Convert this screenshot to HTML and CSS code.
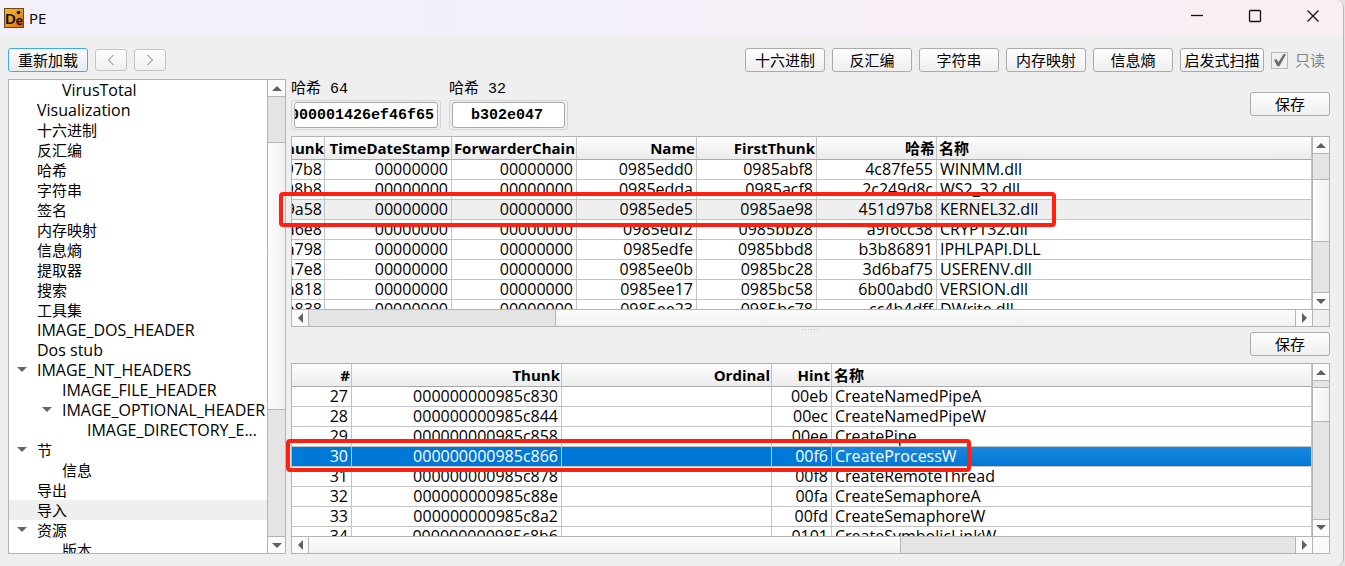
FILE: index.html
```html
<!DOCTYPE html>
<html lang="zh-CN">
<head>
<meta charset="utf-8">
<title>PE</title>
<link rel="stylesheet" href="styles.css">
</head>
<body>
<div class="window">
  <header class="titlebar">
    <svg class="logo" viewBox="0 0 20 20" aria-hidden="true">
      <defs><linearGradient id="lg" x1="0" y1="0" x2="1" y2="1"><stop offset="0" stop-color="#f2bd28"/><stop offset=".55" stop-color="#e59522"/><stop offset="1" stop-color="#e2571c"/></linearGradient></defs>
      <rect x=".5" y=".5" width="19" height="19" fill="url(#lg)" stroke="#6b4a1c"/>
      <text x="1" y="16" class="logo-text">D<tspan class="logo-e" y="17">e</tspan></text>
      <circle cx="14.500" cy="4.500" r="1.800" fill="#16120c"/>
    </svg>
    <span class="title">PE</span>
    <div class="controls">
      <button type="button" aria-label="Minimize"><svg viewBox="0 0 14 14"><path d="M1 6.500H13"/></svg></button>
      <button type="button" aria-label="Maximize"><svg viewBox="0 0 14 14"><rect x="1.500" y="1.500" width="11" height="11" rx="1"/></svg></button>
      <button type="button" aria-label="Close"><svg viewBox="0 0 14 14"><path d="M1.500 1.500L12.500 12.500M12.500 1.500L1.500 12.500"/></svg></button>
    </div>
  </header>

  <nav class="toolbar">
    <button type="button" class="btn focus">重新加载</button>
    <button type="button" class="btn step" aria-label="Back"><svg viewBox="0 0 8 12"><path d="M6.500 1L1.500 6L6.500 11"/></svg></button>
    <button type="button" class="btn step" aria-label="Forward"><svg viewBox="0 0 8 12"><path d="M1.500 1L6.500 6L1.500 11"/></svg></button>
    <span class="spacer"></span>
    <button type="button" class="btn">十六进制</button>
    <button type="button" class="btn">反汇编</button>
    <button type="button" class="btn">字符串</button>
    <button type="button" class="btn">内存映射</button>
    <button type="button" class="btn">信息熵</button>
    <button type="button" class="btn wide">启发式扫描</button>
    <label class="readonly"><input type="checkbox" checked disabled>只读</label>
  </nav>

  <main class="content">
    <aside class="tree">
      <ul>
        <li class="l2">VirusTotal</li>
        <li>Visualization</li>
        <li class="zh">十六进制</li>
        <li class="zh">反汇编</li>
        <li class="zh">哈希</li>
        <li class="zh">字符串</li>
        <li class="zh">签名</li>
        <li class="zh">内存映射</li>
        <li class="zh">信息熵</li>
        <li class="zh">提取器</li>
        <li class="zh">搜索</li>
        <li class="zh">工具集</li>
        <li>IMAGE_DOS_HEADER</li>
        <li>Dos stub</li>
        <li class="open">IMAGE_NT_HEADERS</li>
        <li class="l2">IMAGE_FILE_HEADER</li>
        <li class="l2 open">IMAGE_OPTIONAL_HEADER</li>
        <li class="l3">IMAGE_DIRECTORY_E...</li>
        <li class="zh open">节</li>
        <li class="zh l2">信息</li>
        <li class="zh">导出</li>
        <li class="zh current">导入</li>
        <li class="zh open">资源</li>
        <li class="zh l2">版本</li>
      </ul>
      <div class="vbar tree-bar"><i class="arrow up"></i><i class="before"></i><i class="thumb"></i><i class="after"></i><i class="arrow down"></i></div>
    </aside>

    <section class="detail">
      <div class="summary">
        <div class="hash">
          <label for="h64">哈希 64</label>
          <div class="frame frame64"><input id="h64" type="text" readonly value="000001426ef46f65"></div>
        </div>
        <div class="hash">
          <label for="h32">哈希 32</label>
          <div class="frame frame32"><input id="h32" type="text" readonly value="b302e047"></div>
        </div>
        <span class="spacer"></span>
        <button type="button" class="btn">保存</button>
      </div>

      <div class="grid">
        <div class="view">
          <table>
            <colgroup><col class="w33"><col class="w127"><col class="w125"><col class="w120"><col class="w120"><col class="w120"><col></colgroup>
            <thead><tr><th>hunk</th><th>TimeDateStamp</th><th>ForwarderChain</th><th>Name</th><th>FirstThunk</th><th>哈希</th><th>名称</th></tr></thead>
            <tbody>
              <tr><td>97b8</td><td>00000000</td><td>00000000</td><td>0985edd0</td><td>0985abf8</td><td>4c87fe55</td><td>WINMM.dll</td></tr>
              <tr><td>98b8</td><td>00000000</td><td>00000000</td><td>0985edda</td><td>0985acf8</td><td>2c249d8c</td><td>WS2_32.dll</td></tr>
              <tr class="current"><td>9a58</td><td>00000000</td><td>00000000</td><td>0985ede5</td><td>0985ae98</td><td>451d97b8</td><td>KERNEL32.dll</td></tr>
              <tr><td>a6e8</td><td>00000000</td><td>00000000</td><td>0985edf2</td><td>0985bb28</td><td>a9f6cc38</td><td>CRYPT32.dll</td></tr>
              <tr><td>a798</td><td>00000000</td><td>00000000</td><td>0985edfe</td><td>0985bbd8</td><td>b3b86891</td><td>IPHLPAPI.DLL</td></tr>
              <tr><td>a7e8</td><td>00000000</td><td>00000000</td><td>0985ee0b</td><td>0985bc28</td><td>3d6baf75</td><td>USERENV.dll</td></tr>
              <tr><td>a818</td><td>00000000</td><td>00000000</td><td>0985ee17</td><td>0985bc58</td><td>6b00abd0</td><td>VERSION.dll</td></tr>
              <tr><td>a838</td><td>00000000</td><td>00000000</td><td>0985ee23</td><td>0985bc78</td><td>cc4b4dff</td><td>DWrite.dll</td></tr>
            </tbody>
          </table>
        </div>
        <div class="vbar dll-v"><i class="arrow up"></i><i class="before"></i><i class="thumb"></i><i class="after"></i><i class="arrow down"></i></div>
        <div class="hbar dll-h"><i class="arrow left"></i><i class="before"></i><i class="thumb"></i><i class="after"></i><i class="arrow right"></i></div>
        <div class="corner"></div>
        <div class="mark mark-dll"></div>
      </div>

      <div class="splitter"></div>
      <div class="actions"><button type="button" class="btn">保存</button></div>

      <div class="grid">
        <div class="view">
          <table>
            <colgroup><col class="w60"><col class="w210"><col class="w210"><col class="w60"><col></colgroup>
            <thead><tr><th>#</th><th>Thunk</th><th>Ordinal</th><th>Hint</th><th>名称</th></tr></thead>
            <tbody>
              <tr><td>27</td><td>000000000985c830</td><td></td><td>00eb</td><td>CreateNamedPipeA</td></tr>
              <tr><td>28</td><td>000000000985c844</td><td></td><td>00ec</td><td>CreateNamedPipeW</td></tr>
              <tr><td>29</td><td>000000000985c858</td><td></td><td>00ee</td><td>CreatePipe</td></tr>
              <tr class="selected"><td>30</td><td>000000000985c866</td><td></td><td>00f6</td><td>CreateProcessW</td></tr>
              <tr><td>31</td><td>000000000985c878</td><td></td><td>00f8</td><td>CreateRemoteThread</td></tr>
              <tr><td>32</td><td>000000000985c88e</td><td></td><td>00fa</td><td>CreateSemaphoreA</td></tr>
              <tr><td>33</td><td>000000000985c8a2</td><td></td><td>00fd</td><td>CreateSemaphoreW</td></tr>
              <tr><td>34</td><td>000000000985c8b6</td><td></td><td>0101</td><td>CreateSymbolicLinkW</td></tr>
            </tbody>
          </table>
        </div>
        <div class="vbar fn-v"><i class="arrow up"></i><i class="before"></i><i class="thumb"></i><i class="after"></i><i class="arrow down"></i></div>
        <div class="hbar fn-h"><i class="arrow left"></i><i class="thumb"></i><i class="after"></i><i class="arrow right"></i></div>
        <div class="corner light"></div>
        <div class="mark mark-fn"></div>
      </div>
    </section>
  </main>
</div>
<script src="app.js"></script>
</body>
</html>
```

FILE: app.js
```js
// Show the low-order digits of the long hash.
const hash = document.getElementById("h64");
hash.scrollLeft = hash.scrollWidth;
```

FILE: styles.css
```css
* { box-sizing: border-box; }

body {
  margin: 0;
  background: #e3e3e3;
  color: #000;
  font: 15px/20px "Open Sans", "Noto Sans CJK SC", sans-serif;
}

button, input { font: inherit; color: inherit; }

.window {
  display: flex;
  flex-direction: column;
  height: 100vh;
  margin-right: 1px;
  border-right: 1px solid #b9b9b9;
  border-radius: 0 8px 8px 0;
  background: #efefef;
  overflow: hidden;
}

/* Title bar */
.titlebar {
  display: flex;
  align-items: center;
  flex: none;
  height: 35px;
  padding-left: 4px;
  background: linear-gradient(90deg, #f2f0f8, #f4eff8 50%, #faeef6 80%, #f9eef3);
}
.logo { width: 20px; height: 20px; }
.logo-text { font: 900 14px "Lato", sans-serif; fill: #16120c; }
.logo-e { font-size: 13px; }
.title { margin-left: 5px; font-size: 15px; }
.controls { display: flex; margin-left: auto; padding-right: 1px; height: 100%; }
.controls button {
  display: flex;
  align-items: center;
  justify-content: center;
  width: 58px;
  padding: 0 0 3px;
  border: 0;
  background: none;
}
.controls svg { width: 14px; height: 14px; fill: none; stroke: #111; stroke-width: 1.3; }

/* Buttons */
.btn {
  width: 80px;
  height: 24px;
  padding: 0;
  border: 1px solid #ababab;
  border-radius: 3px;
  background: linear-gradient(#fdfdfd, #efefef);
  line-height: 20px;
  white-space: nowrap;
}
.btn.wide { width: 84px; }
.btn.focus { border-color: #3daaf2; background: linear-gradient(#fbfcfd, #e5ecf2); }
.btn.step {
  display: flex;
  align-items: center;
  justify-content: center;
  width: 32px;
  height: 22px;
  border-color: #c4c4c4;
}
.step svg { width: 8px; height: 12px; fill: none; stroke: #777; }
.spacer { flex: 1; }

.toolbar {
  display: flex;
  align-items: center;
  gap: 7px;
  flex: none;
  padding: 13px 18px 7px 8px;
}
.readonly { display: flex; align-items: center; gap: 7px; color: #848484; }
.readonly input {
  appearance: none;
  width: 17px;
  height: 17px;
  margin: 0;
  border: 1px solid #b8b8b8;
  background: #efefef;
}
.readonly input:checked::before {
  content: "";
  display: block;
  width: 13px;
  height: 13px;
  margin: 1px;
  background: #6e6e6e;
  clip-path: polygon(8% 50%, 26% 42%, 42% 68%, 84% 0, 100% 8%, 48% 100%, 32% 96%);
}

/* Body */
.content {
  display: flex;
  gap: 5px;
  flex: 1;
  min-height: 0;
  padding: 0 13px 12px 8px;
}

.tree {
  display: flex;
  flex: none;
  width: 278px;
  border: 1px solid #b4b4b4;
  background: #fff;
  overflow: hidden;
}
.tree ul { flex: 1; min-width: 0; margin: 0; padding: 0; list-style: none; }
.tree li { position: relative; height: 20px; padding-left: 28px; font-size: 16px; white-space: nowrap; }
.tree .zh { font-size: 15px; }
.tree .l2 { padding-left: 53px; }
.tree .l3 { padding-left: 78px; }
.tree .current { background: #efefef; }
.tree .open::before {
  content: "";
  position: absolute;
  top: 7px;
  left: 8px;
  border: 5px solid transparent;
  border-top-color: #666;
  border-bottom: 0;
}
.tree .l2.open::before { left: 33px; }

.detail { display: flex; flex-direction: column; flex: 1; min-width: 0; }

.summary { display: flex; align-items: center; gap: 8px; flex: none; height: 57px; }
.summary .btn { margin-bottom: 7px; }
.hash { display: flex; flex-direction: column; margin-bottom: 5px; }
.hash label { line-height: 20px; font-family: "Liberation Mono", "Noto Sans CJK SC", monospace; }
.frame { height: 30px; padding: 1px 2px 3px; border: 1px solid #d5d5d5; border-radius: 3px; }
.frame64 { width: 150px; }
.frame32 { width: 119px; }
.frame input {
  display: block;
  width: 100%;
  height: 26px;
  padding: 0 3px 0 0;
  border: 1px solid #a8a8a8;
  border-radius: 3px;
  background: #fff;
  font: bold 15px "Liberation Mono", monospace;
  text-align: center;
}

/* Data grids */
.grid {
  position: relative;
  display: grid;
  grid-template: minmax(0, 1fr) 17px / minmax(0, 1fr) 17px;
  flex: 1 1 0;
  min-height: 0;
  border: 1px solid #b4b4b4;
  background: #fff;
}
.view { overflow: hidden; }
table { width: 100%; table-layout: fixed; border-collapse: separate; border-spacing: 0; }
th, td {
  height: 20px;
  padding: 0 3px 0 0;
  border-right: 1px solid #c4c4c4;
  border-bottom: 1px solid #c4c4c4;
  font-size: 16px;
  line-height: 19px;
  text-align: right;
  white-space: nowrap;
}
th {
  height: 23px;
  padding: 0 1px 0 0;
  border-bottom-color: #ababab;
  background: linear-gradient(#fdfdfd, #ececec);
  font-size: 15px;
  font-weight: bold;
}
th:first-child, td:first-child { direction: rtl; overflow: hidden; }
th:last-child, td:last-child { padding-left: 3px; text-align: left; }
th:last-child { padding-left: 2px; }
tr.current td { background: #efefef; }
tr.selected td { background: #0078d7; color: #fff; }
tr.selected td:last-child { background: linear-gradient(#1a86dc, #0078d7); }
.w33 { width: 33px; }
.w60 { width: 60px; }
.w120 { width: 120px; }
.w125 { width: 125px; }
.w127 { width: 127px; }
.w210 { width: 210px; }

/* Scroll bars */
.vbar, .hbar { display: flex; background: #e4e4e4; }
.vbar { flex-direction: column; flex: none; width: 18px; border-left: 1px solid #b4b4b4; }
.grid .vbar { width: 17px; }
.hbar { border-top: 1px solid #b4b4b4; }
.arrow {
  display: flex;
  align-items: center;
  justify-content: center;
  flex: 0 0 17px;
  background: #fafafa;
}
.arrow::before { content: ""; border: 5px solid transparent; }
.up { border-bottom: 1px solid #b4b4b4; }
.up::before { border-bottom-color: #606060; border-top: 0; }
.down { border-top: 1px solid #b4b4b4; }
.down::before { border-top-color: #606060; border-bottom: 0; }
.left { border-right: 1px solid #b4b4b4; }
.left::before { border-right-color: #606060; border-left: 0; }
.right { border-left: 1px solid #b4b4b4; }
.right::before { border-left-color: #606060; border-right: 0; }
.vbar .thumb { border: solid #b4b4b4; border-width: 1px 0; background: linear-gradient(90deg, #fcfcfc, #f1f1f1); }
.hbar .thumb { background: linear-gradient(#fcfcfc, #f1f1f1); }
.before + .thumb { border-left: 0 solid #b4b4b4; }
.dll-h .thumb { border-left-width: 1px; }
.fn-h .thumb { border-right: 1px solid #b4b4b4; }
.tree-bar .before { flex: 45; }
.tree-bar .thumb { flex: 267; }
.tree-bar .after { flex: 127; }
.dll-v .before { flex: 25; }
.dll-v .thumb { flex: 62; }
.dll-v .after { flex: 51; }
.dll-h .before { flex: 246; }
.dll-h .thumb { flex: 740; }
.fn-v .before { flex: 6; }
.fn-v .thumb { flex: 34; }
.fn-v .after { flex: 98; }
.fn-h .thumb { flex: 592; }
.fn-h .after { flex: 394; }
.corner { border: solid #b4b4b4; border-width: 1px 0 0 1px; background: #efefef; }
.corner.light { background: #fafafa; }

.splitter {
  flex: none;
  align-self: center;
  width: 17px;
  height: 5px;
  background: linear-gradient(#c4c4c4, #c4c4c4) 0 2px / 17px 1px no-repeat;
  mask: repeating-linear-gradient(90deg, #000 0 1px, transparent 1px 3px);
}
.actions { display: flex; justify-content: flex-end; flex: none; padding-bottom: 7px; }

/* Highlight frames around the rows of interest */
.mark { position: absolute; border: 4px solid #ff2012; border-radius: 4px; pointer-events: none; }
.mark-dll { top: 55px; left: -13px; width: 777px; height: 35px; }
.mark-fn { top: 75px; left: -6px; width: 685px; height: 33px; }
```
